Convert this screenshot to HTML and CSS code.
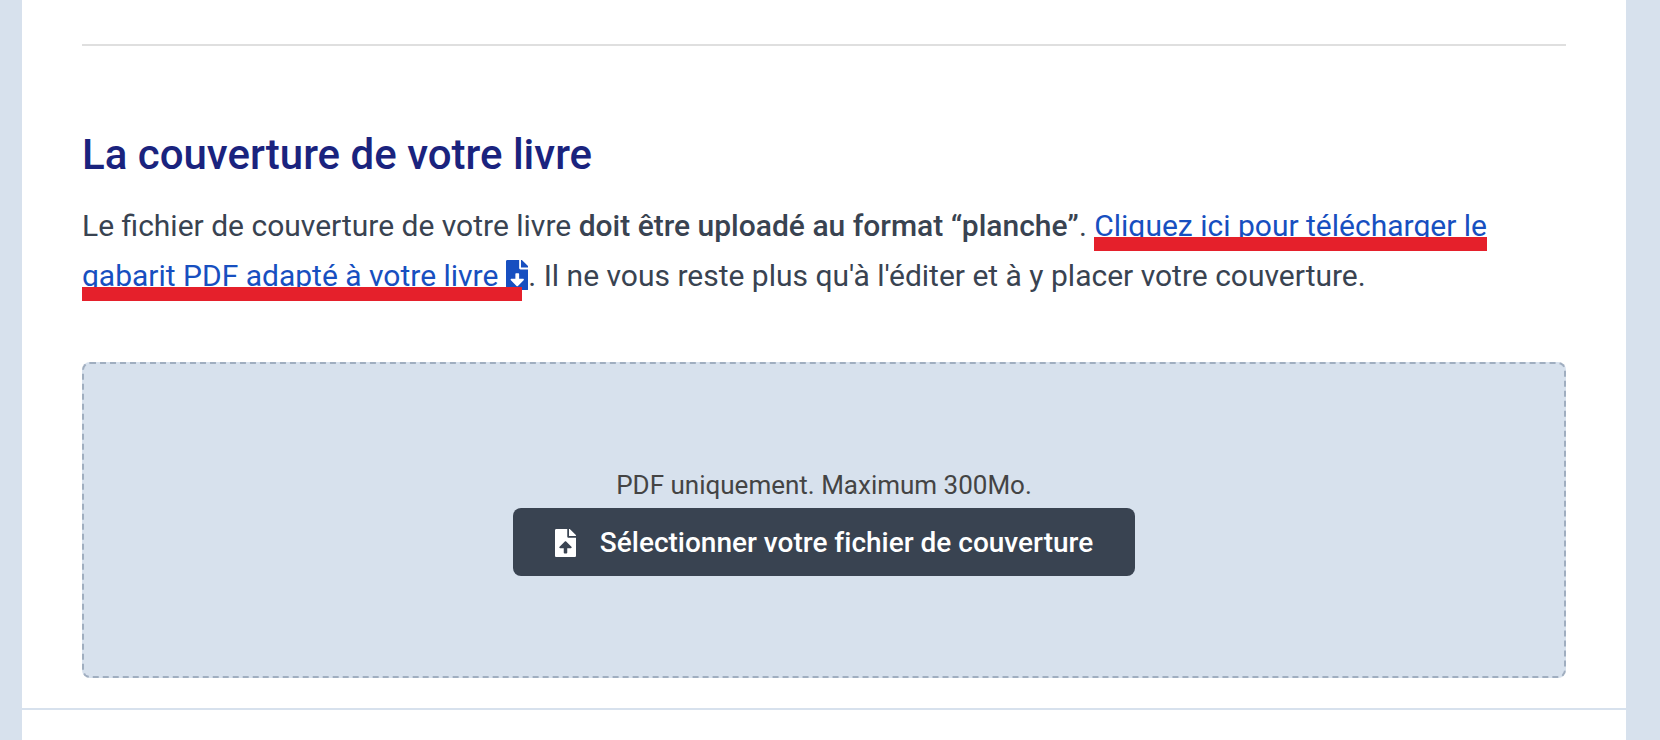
FILE: index.html
```
<!DOCTYPE html>
<html lang="fr">

<head>
    <meta charset="UTF-8">
    <title>La couverture de votre livre</title>
    <link rel="stylesheet" href="styles.css">
</head>

<body>
    <main class="panel">
        <section class="cover">
            <hr class="separator">
            <h2>La couverture de votre livre</h2>
            <p class="intro">
                Le fichier de couverture de votre livre <strong>doit être uploadé au format “planche”</strong>.
                <a href="#"><span class="mark">Cliquez ici pour télécharger le</span> <span class="mark mark-short">gabarit PDF adapté à votre livre <svg class="icon" viewBox="0 0 384 512" aria-hidden="true"><path d="M224 136V0H24C10.7 0 0 10.7 0 24v464c0 13.3 10.7 24 24 24h336c13.3 0 24-10.7 24-24V160H248c-13.2 0-24-10.8-24-24zm76.45 211.36l-96.42 95.7c-6.65 6.61-17.39 6.61-24.04 0l-96.42-95.7C73.42 337.29 80.54 320 94.82 320H160v-80c0-8.84 7.16-16 16-16h32c8.84 0 16 7.16 16 16v80h65.18c14.28 0 21.4 17.29 11.27 27.36zM377 105L279.1 7c-4.5-4.5-10.6-7-17-7H256v128h128v-6.1c0-6.3-2.5-12.4-7-16.9z"/></svg></span></a>. Il ne vous reste plus qu'à l'éditer et à y placer votre couverture.
            </p>

            <div class="dropzone">
                <p class="hint" id="hint">PDF uniquement. Maximum 300Mo.</p>
                <button type="button" class="select-btn" aria-describedby="hint">
                    <svg class="icon" viewBox="0 0 384 512" aria-hidden="true"><path d="M224 136V0H24C10.7 0 0 10.7 0 24v464c0 13.3 10.7 24 24 24h336c13.3 0 24-10.7 24-24V160H248c-13.2 0-24-10.8-24-24zm65.18 216.01H224v80c0 8.84-7.16 16-16 16h-32c-8.84 0-16-7.16-16-16v-80H94.82c-14.28 0-21.41-17.29-11.27-27.36l96.42-95.7c6.65-6.61 17.39-6.61 24.04 0l96.42 95.7c10.15 10.07 3.03 27.36-11.25 27.36zM377 105L279.1 7c-4.5-4.5-10.6-7-17-7H256v128h128v-6.1c0-6.3-2.5-12.4-7-16.9z"/></svg>
                    Sélectionner votre fichier de couverture
                </button>
            </div>
        </section>
    </main>
</body>

</html>
```
FILE: styles.css
```
* {
    box-sizing: border-box;
}

body {
    margin: 0;
    padding: 0 34px 0 22px;
    font-family: Roboto, sans-serif;
    background-color: #d7e1ed;
}

.panel {
    min-height: 100vh;
    background-color: #fff;
}

.cover {
    padding: 44px 60px 30px;
    border-bottom: 2px solid #d7e1ed;
}

.separator {
    margin: 0 0 84px;
    border: none;
    border-top: 2px solid #dfdfdf;
}

h2 {
    margin: 0;
    font-size: 42px;
    font-weight: 500;
    line-height: 50px;
    color: #1a237e;
}

.intro {
    margin: 21px 0 61px;
    font-size: 30px;
    line-height: 50px;
    color: #394351;
}

.intro strong {
    font-weight: 500;
}

.intro a {
    color: #174fc0;
    text-decoration: none;
}

.intro .icon {
    height: 30px;
    vertical-align: -4px;
}

.icon {
    fill: currentColor;
}

/* thick red line drawn over the bottom of the link */
.mark {
    position: relative;
}

.mark::after {
    content: "";
    position: absolute;
    left: 0;
    right: 0;
    bottom: -8px;
    height: 14px;
    background-color: #e5202b;
}

.mark-short::after {
    right: 6px;
}

.dropzone {
    display: flex;
    flex-direction: column;
    align-items: center;
    padding: 105px 20px 100px;
    border: 2px dashed #a0aec0;
    border-radius: 8px;
    background-color: #d7e1ed;
}

.hint {
    margin: 0 0 7px;
    font-size: 26px;
    line-height: 32px;
    color: #444;
}

.select-btn {
    display: flex;
    align-items: center;
    gap: 24px;
    padding: 19px 42px 17px;
    font-family: inherit;
    font-size: 28px;
    font-weight: 500;
    font-variant-ligatures: none;
    line-height: 32px;
    color: #fff;
    background-color: #394351;
    border: none;
    border-radius: 8px;
    cursor: pointer;
}

.select-btn .icon {
    height: 28px;
}
```
